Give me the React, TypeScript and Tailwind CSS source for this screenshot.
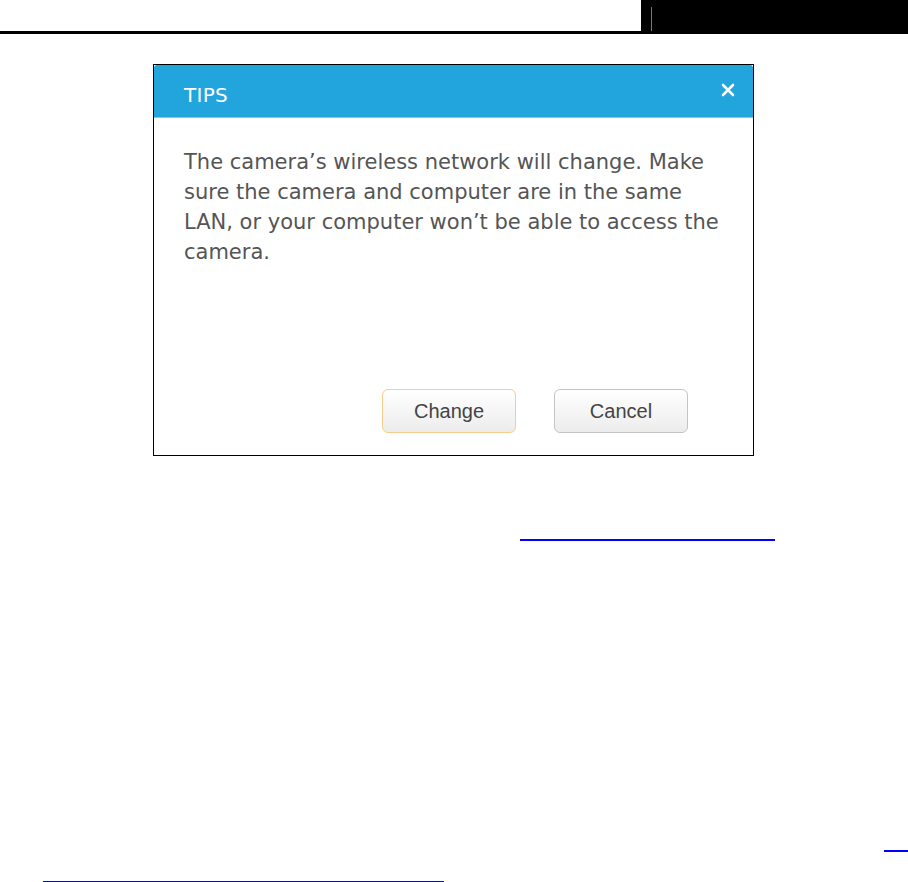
export default function App() {
  return (
    <div className="w-[908px] h-[882px] bg-white overflow-hidden relative font-['DejaVu_Sans',sans-serif]">
      {/* page header */}
      <div className="flex h-[34px] border-b-[3px] border-black">
        <div className="flex-1" />
        <div className="w-[267px] bg-black flex items-end">
          <div className="ml-[10px] w-px h-[24px] bg-[#777]" />
        </div>
      </div>

      {/* dialog screenshot */}
      <div className="ml-[153px] mt-[30px] w-[601px] h-[392px] border border-black bg-white flex flex-col">
        <div className="h-[53px] bg-[#21a5dc] rounded-t-[3px] border-b border-[#7ccbed] flex items-center justify-between pl-[30px] pr-[16px]">
          <span className="pt-[8px] text-white text-[20px] tracking-[0.3px]">TIPS</span>
          <svg width="14" height="14" viewBox="0 0 14 14" className="mr-[2px] -mt-[2px]">
            <path d="M2 2 L12 12 M12 2 L2 12" stroke="white" strokeWidth="2.6" strokeLinecap="round" />
          </svg>
        </div>
        <div className="flex-1 flex flex-col px-[30px] pt-[29px]">
          <p className="text-[#555] text-[21px] leading-[30px] w-[545px]">
            The camera’s wireless network will change. Make sure the camera and computer are in the same LAN, or your computer won’t be able to access the camera.
          </p>
          <div className="mt-auto mb-[22px] flex gap-[38px] pl-[198px]">
            <button className="w-[134px] h-[44px] rounded-[6px] border border-[#f7cd8c] bg-gradient-to-b from-white to-[#ececec] text-[#444] text-[20px] font-['Liberation_Sans',sans-serif]">
              Change
            </button>
            <button className="w-[134px] h-[44px] rounded-[6px] border border-[#c4c4c4] bg-gradient-to-b from-white to-[#ececec] text-[#444] text-[20px] font-['Liberation_Sans',sans-serif]">
              Cancel
            </button>
          </div>
        </div>
      </div>

      {/* link underlines */}
      <div className="ml-[520px] mt-[83px] w-[255px] h-[2px] bg-[#0000ff]" />
      <div className="ml-[884px] mt-[309px] w-[24px] h-[2px] bg-[#0000ff]" />
      <div className="ml-[43px] mt-[29px] w-[401px] h-[2px] bg-[#0000ff]" />
    </div>
  );
}
